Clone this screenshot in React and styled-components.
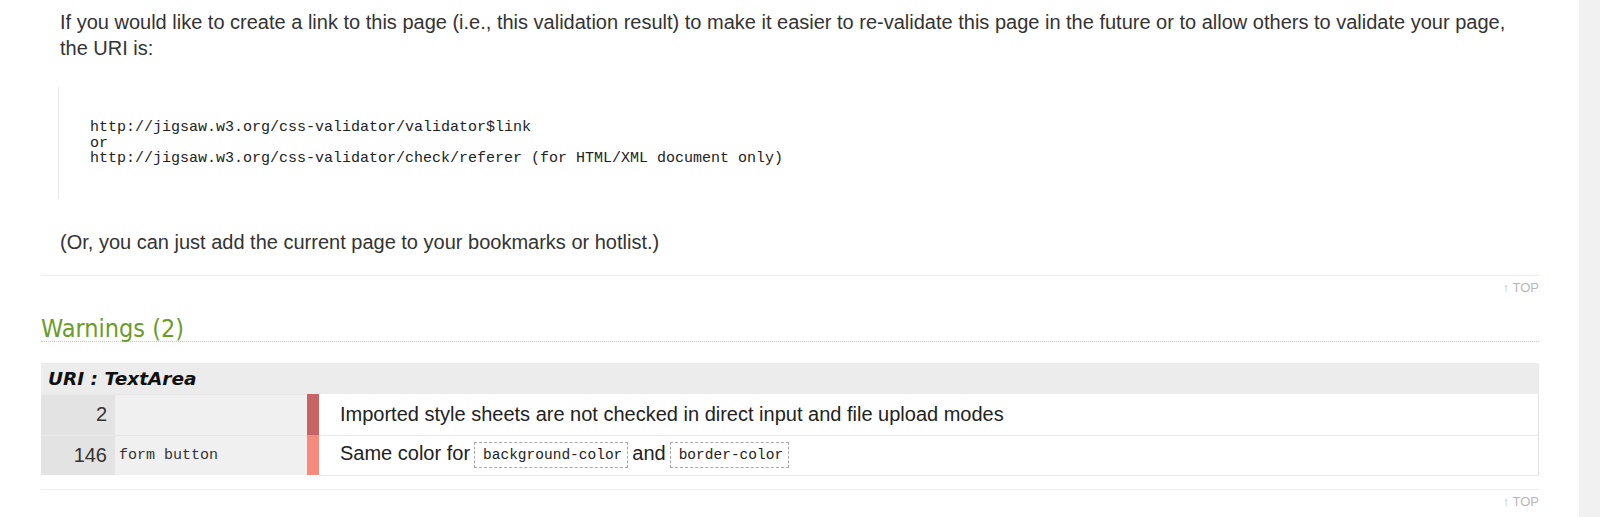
import { createGlobalStyle } from 'styled-components';
import styled from 'styled-components';

const GlobalStyle = createGlobalStyle`
    html, body {
        margin: 0;
        padding: 0;
        height: 517px;
        overflow: hidden;
        background: #fff;
        font-family: "Liberation Sans", Arial, sans-serif;
        color: #333;
    }
`;

const PageStyled = styled.div`
    display: flex;
    height: 517px;
`;

const MainStyled = styled.div`
    flex: 1;
    padding: 9px 40px 0 41px;
    overflow: hidden;
`;

const ScrollTrack = styled.div`
    width: 21px;
    background: #f1f1f1;
`;

const Paragraph = styled.p`
    margin: ${props => props.$top || 0}px 19px 0 19px;
    font-size: 20px;
    line-height: 26px;
    color: #333;
`;

const PreBlock = styled.pre`
    margin: 26px 0 0 17px;
    padding: 33px 0 32px 31px;
    border-left: 1px solid #e8e8e8;
    font-family: "Liberation Mono", "DejaVu Sans Mono", monospace;
    font-size: 15px;
    line-height: 15.5px;
    color: #222;
`;

const Rule = styled.div`
    margin-top: ${props => props.$top}px;
    height: 1px;
    background: #eeeeee;
`;

const TopLink = styled.div`
    margin-top: 5px;
    text-align: right;
    font-size: 13px;
    line-height: 14px;
    color: #b8b8b8;
`;

const SectionTitle = styled.h2`
    margin: 22px 0 0 0;
    padding-bottom: 0;
    font-family: "DejaVu Sans Condensed", "DejaVu Sans", sans-serif;
    font-weight: normal;
    font-size: 25px;
    line-height: 24px;
    color: #6a9d2a;
    border-bottom: 1px dotted #c8c8c8;
`;

const Table = styled.table`
    margin-top: 21px;
    width: 100%;
    border-collapse: collapse;
    table-layout: fixed;
`;

const HeaderCell = styled.th`
    height: 31px;
    padding: 0 0 0 7px;
    background: #ececec;
    text-align: left;
    font-family: "DejaVu Sans", sans-serif;
    font-weight: bold;
    font-style: italic;
    font-size: 18.5px;
    color: #111;
`;

const Row = styled.tr`
    height: ${props => props.$h}px;
`;

const LineCell = styled.td`
    padding: 0 8px 0 0;
    background: #e3e3e3;
    text-align: right;
    font-size: 20px;
    color: #333;
    border-top: 1px solid #eaeaea;
`;

const SelectorCell = styled.td`
    padding: 0 0 0 4px;
    background: #f0f0f0;
    font-family: "Liberation Mono", "DejaVu Sans Mono", monospace;
    font-size: 15px;
    color: #333;
    border-top: 1px solid #e6e6e6;
`;

const BarCell = styled.td`
    padding: 0;
    background: ${props => props.$color};
`;

const MessageCell = styled.td`
    padding: 0 0 0 21px;
    font-size: 20px;
    color: #222;
    border-bottom: 1px solid #fbe2e2;
    border-right: 1px solid #e0e0e0;
    white-space: nowrap;
`;

const Code = styled.code`
    display: inline-block;
    padding: 3px 5px 2px 8px;
    margin: 0 4px;
    border: 1px dashed #aaa;
    font-family: "Liberation Mono", "DejaVu Sans Mono", monospace;
    font-size: 14.5px;
    line-height: 19px;
    color: #222;
    vertical-align: middle;
`;

const warnings = [
    { line: '2', selector: '', color: '#c96464', text: 'Imported style sheets are not checked in direct input and file upload modes' },
    { line: '146', selector: 'form button', color: '#f58b7d', same: true },
];

export default function App() {
    return (
        <PageStyled>
            <GlobalStyle />
            <MainStyled>
                <Paragraph>
                    If you would like to create a link to this page (i.e., this validation result) to make it easier to re-validate this page in the future or to allow others to validate your page, the URI is:
                </Paragraph>
                <PreBlock>{`http://jigsaw.w3.org/css-validator/validator$link
or
http://jigsaw.w3.org/css-validator/check/referer (for HTML/XML document only)`}</PreBlock>
                <Paragraph $top={30}>(Or, you can just add the current page to your bookmarks or hotlist.)</Paragraph>
                <Rule $top={20} />
                <TopLink>↑ TOP</TopLink>

                <SectionTitle>Warnings (2)</SectionTitle>
                <Table>
                    <colgroup>
                        <col style={{ width: 74 }} />
                        <col style={{ width: 192 }} />
                        <col style={{ width: 12 }} />
                        <col />
                    </colgroup>
                    <thead>
                        <tr>
                            <HeaderCell colSpan={4}>URI : TextArea</HeaderCell>
                        </tr>
                    </thead>
                    <tbody>
                        {warnings.map((w, i) => (
                            <Row key={w.line} $h={i === 0 ? 41 : 40}>
                                <LineCell>{w.line}</LineCell>
                                <SelectorCell>{w.selector}</SelectorCell>
                                <BarCell $color={w.color} />
                                <MessageCell>
                                    {w.same ? (
                                        <>Same color for<Code>background-color</Code>and<Code>border-color</Code></>
                                    ) : w.text}
                                </MessageCell>
                            </Row>
                        ))}
                    </tbody>
                </Table>
                <Rule $top={13} />
                <TopLink>↑ TOP</TopLink>
            </MainStyled>
            <ScrollTrack />
        </PageStyled>
    );
}
